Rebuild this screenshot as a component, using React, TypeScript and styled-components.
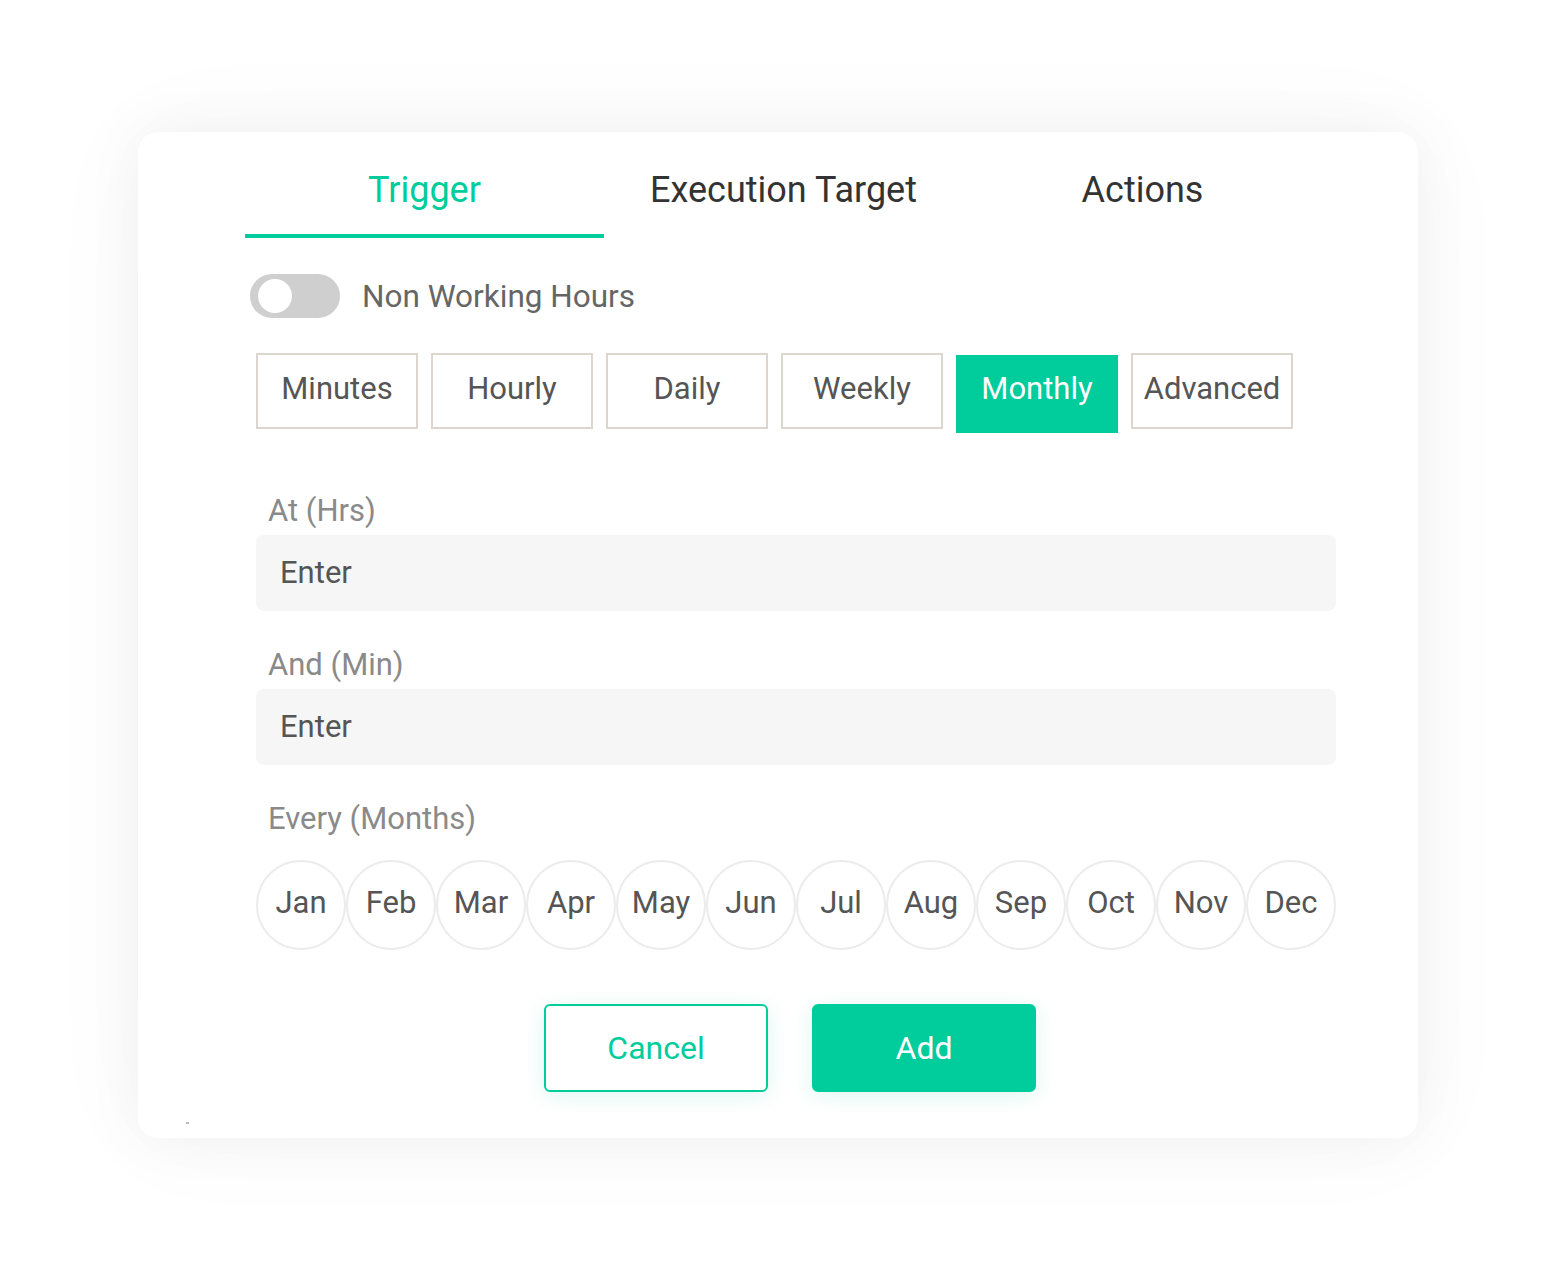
import { useState } from "react";
import styled, { createGlobalStyle } from "styled-components";

const GREEN = "#00cc9c";

const GlobalStyle = createGlobalStyle`
  html, body {
    margin: 0;
    padding: 0;
    background: #fff;
  }
  * {
    box-sizing: border-box;
  }
`;

// ============================================================================
// LAYOUT
// ============================================================================

const Page = styled.div`
  width: 1556px;
  height: 1282px;
  padding: 132px 138px 0;
  font-family: Roboto, "Noto Sans", Arial, sans-serif;
`;

const Card = styled.div`
  position: relative;
  width: 1280px;
  height: 1006px;
  background: #fff;
  border-radius: 20px;
  box-shadow: 0 0 60px rgba(0, 0, 0, 0.05), 0 0 120px rgba(0, 0, 0, 0.03);
  padding: 0 82px 46px 118px;
  display: flex;
  flex-direction: column;

  & > * {
    flex-shrink: 0;
  }
`;

const Tabs = styled.div`
  display: flex;
  margin-left: -11px;
`;

const Tab = styled.button<{ $active: boolean }>`
  all: unset;
  cursor: pointer;
  width: 359px;
  padding: 38px 0 24px;
  text-align: center;
  font-size: 36px;
  line-height: 40px;
  color: ${(p) => (p.$active ? GREEN : "#333")};
  border-bottom: 4px solid ${(p) => (p.$active ? GREEN : "transparent")};
`;

const ToggleRow = styled.label`
  display: flex;
  align-items: center;
  gap: 22px;
  margin: 36px 0 0 -6px;
  cursor: pointer;
`;

const Switch = styled.span<{ $on: boolean }>`
  position: relative;
  width: 90px;
  height: 44px;
  border-radius: 22px;
  background: ${(p) => (p.$on ? GREEN : "#cfcfcf")};
  flex-shrink: 0;
`;

const Knob = styled.span<{ $on: boolean }>`
  position: absolute;
  top: 5px;
  left: ${(p) => (p.$on ? "51px" : "8px")};
  width: 34px;
  height: 34px;
  border-radius: 50%;
  background: #fff;
`;

const ToggleLabel = styled.span`
  font-size: 31.5px;
  color: #666;
`;

const PeriodRow = styled.div`
  display: flex;
  gap: 13px;
  margin-top: 35px;
  height: 76px;
  align-items: flex-start;
`;

const PeriodButton = styled.button<{ $active: boolean }>`
  all: unset;
  cursor: pointer;
  width: 162px;
  height: ${(p) => (p.$active ? "78px" : "76px")};
  margin-top: ${(p) => (p.$active ? "2px" : "0")};
  padding-bottom: ${(p) => (p.$active ? "12px" : "6px")};
  display: flex;
  align-items: center;
  justify-content: center;
  font-size: 31px;
  color: ${(p) => (p.$active ? "#fff" : "#555")};
  background: ${(p) => (p.$active ? GREEN : "#fff")};
  border: 2px solid ${(p) => (p.$active ? GREEN : "#dcd6cf")};
  box-sizing: border-box;
`;

const FieldLabel = styled.div<{ $top: number }>`
  margin: ${(p) => p.$top}px 0 0 12px;
  font-size: 31px;
  line-height: 36px;
  color: #8a8a8a;
`;

const Input = styled.input`
  all: unset;
  box-sizing: border-box;
  margin-top: 6px;
  height: 76px;
  padding: 0 24px 2px;
  background: #f6f6f6;
  border-radius: 8px;
  font-family: inherit;
  font-size: 31px;
  color: #555;
  &::placeholder {
    color: #555;
  }
`;

const MonthRow = styled.div`
  display: grid;
  grid-template-columns: repeat(12, 90px);
  margin-top: 23px;
`;

const MonthCircle = styled.button<{ $active: boolean }>`
  all: unset;
  cursor: pointer;
  width: 90px;
  height: 90px;
  border-radius: 50%;
  border: 2px solid ${(p) => (p.$active ? GREEN : "#ececec")};
  background: ${(p) => (p.$active ? GREEN : "#fff")};
  color: ${(p) => (p.$active ? "#fff" : "#555")};
  box-sizing: border-box;
  padding-bottom: 5px;
  display: flex;
  align-items: center;
  justify-content: center;
  font-size: 31px;
`;

const Footer = styled.div`
  display: flex;
  gap: 44px;
  margin: 54px 0 0 288px;
`;

const FooterButton = styled.button<{ $primary?: boolean }>`
  all: unset;
  cursor: pointer;
  width: 224px;
  height: 88px;
  border-radius: 6px;
  box-sizing: border-box;
  display: flex;
  align-items: center;
  justify-content: center;
  font-size: 32px;
  border: 2px solid ${GREEN};
  color: ${(p) => (p.$primary ? "#fff" : GREEN)};
  background: ${(p) => (p.$primary ? GREEN : "#fff")};
  box-shadow: 0 4px 22px rgba(0, 204, 156, 0.14);
`;

const Speck = styled.span`
  position: absolute;
  left: 48px;
  bottom: 14px;
  width: 3px;
  height: 2px;
  background: #bbb;
`;

// ============================================================================
// DATA
// ============================================================================

const tabs = ["Trigger", "Execution Target", "Actions"];
const periods = ["Minutes", "Hourly", "Daily", "Weekly", "Monthly", "Advanced"];
const months = ["Jan", "Feb", "Mar", "Apr", "May", "Jun", "Jul", "Aug", "Sep", "Oct", "Nov", "Dec"];

// ============================================================================
// COMPONENT
// ============================================================================

export default function App() {
  const [tab, setTab] = useState("Trigger");
  const [period, setPeriod] = useState("Monthly");
  const [nonWorking, setNonWorking] = useState(false);
  const [picked, setPicked] = useState<string[]>([]);

  const toggleMonth = (m: string) =>
    setPicked((prev) => (prev.includes(m) ? prev.filter((x) => x !== m) : [...prev, m]));

  return (
    <>
      <GlobalStyle />
      <Page>
        <Card>
          <Tabs>
            {tabs.map((t) => (
              <Tab key={t} $active={tab === t} onClick={() => setTab(t)}>
                {t}
              </Tab>
            ))}
          </Tabs>

          <ToggleRow onClick={() => setNonWorking(!nonWorking)}>
            <Switch $on={nonWorking}>
              <Knob $on={nonWorking} />
            </Switch>
            <ToggleLabel>Non Working Hours</ToggleLabel>
          </ToggleRow>

          <PeriodRow>
            {periods.map((p) => (
              <PeriodButton key={p} $active={period === p} onClick={() => setPeriod(p)}>
                {p}
              </PeriodButton>
            ))}
          </PeriodRow>

          <FieldLabel $top={64}>At (Hrs)</FieldLabel>
          <Input placeholder="Enter" />

          <FieldLabel $top={36}>And (Min)</FieldLabel>
          <Input placeholder="Enter" />

          <FieldLabel $top={36}>Every (Months)</FieldLabel>
          <MonthRow>
            {months.map((m) => (
              <MonthCircle key={m} $active={picked.includes(m)} onClick={() => toggleMonth(m)}>
                {m}
              </MonthCircle>
            ))}
          </MonthRow>

          <Footer>
            <FooterButton>Cancel</FooterButton>
            <FooterButton $primary>Add</FooterButton>
          </Footer>

          <Speck />
        </Card>
      </Page>
    </>
  );
}
